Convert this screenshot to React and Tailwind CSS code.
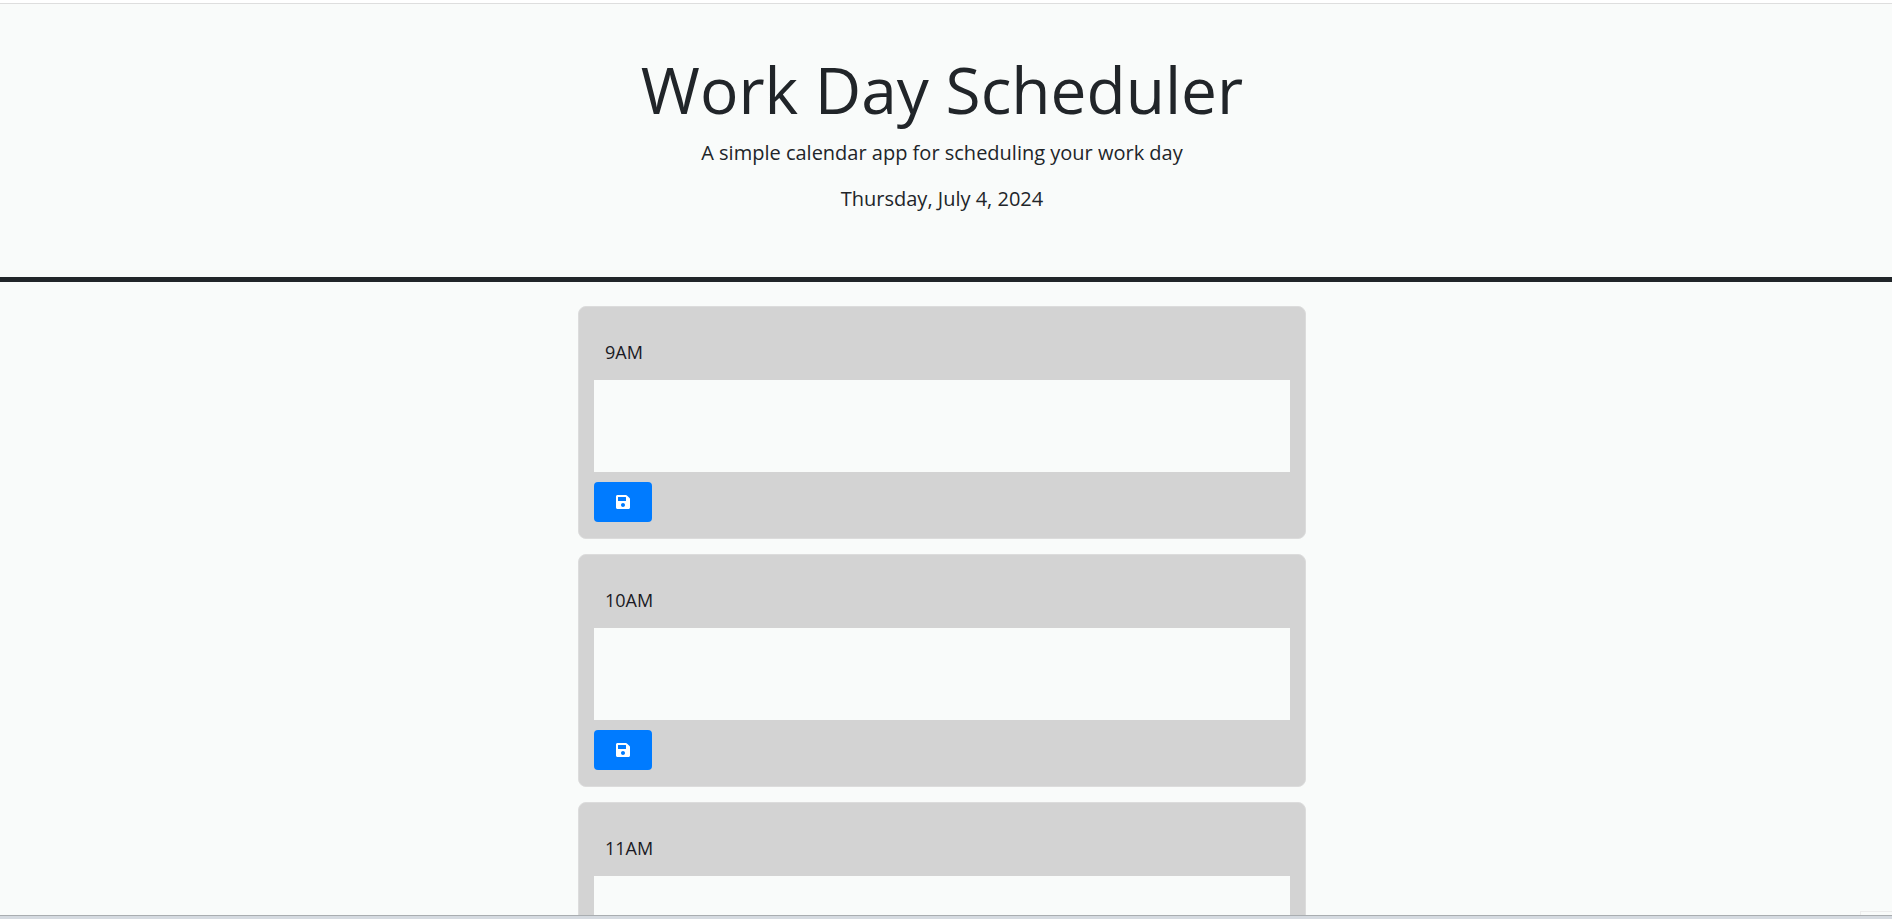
import React from "react";
import { FaSave } from "react-icons/fa";

const hours = ["9AM", "10AM", "11AM"];

const TimeBlock = ({ hour }) => {
  return (
    <div className="shrink-0 h-[233px] rounded-lg border border-[#dcdcdc] bg-[#d3d3d3] px-[15px] pt-[15px]">
      <div className="h-[58px] pl-[11px] pt-[17px] text-[18px] leading-[27px] text-[#1a1a24]">{hour}</div>
      <textarea className="block w-full h-[92px] resize-none bg-[#f9fbfa] outline-none" />
      <button
        type="button"
        className="mt-[10px] flex h-10 w-[58px] items-center justify-center rounded bg-[#007bff] text-white"
      >
        <FaSave size={16} />
      </button>
    </div>
  );
};

const App = () => {
  return (
    <div className="relative flex h-[919px] flex-col overflow-hidden bg-[#f9fbfa] font-['Open_Sans',sans-serif] text-[#212529]">
      <div className="h-[3px] shrink-0 bg-white" />
      <header className="h-[279px] shrink-0 border-t border-b-[5px] border-t-[#dedede] border-b-[#212529] pt-[43px] pr-2 text-center">
        <h1 className="text-[64px] font-normal leading-[86px]">Work Day Scheduler</h1>
        <p className="mt-[5px] text-[20px] font-normal leading-[30px]">A simple calendar app for scheduling your work day</p>
        <p className="mt-4 text-[20px] font-normal leading-[30px]">Thursday, July 4, 2024</p>
      </header>
      <div className="min-h-0 flex-1 overflow-hidden pr-2">
        <main className="mx-auto flex w-[728px] flex-col gap-[15px] pt-6">
          {hours.map((h) => (
            <TimeBlock key={h} hour={h} />
          ))}
        </main>
      </div>
      {/* strip of the window below the page */}
      <div className="h-[4px] shrink-0 border-t border-[#a9adb0] bg-[#d5dae0]" />
      <div className="absolute bottom-[4px] right-0 h-[4px] w-[32px] border-l border-t border-[#ececec]" />
    </div>
  );
};

export default App;
